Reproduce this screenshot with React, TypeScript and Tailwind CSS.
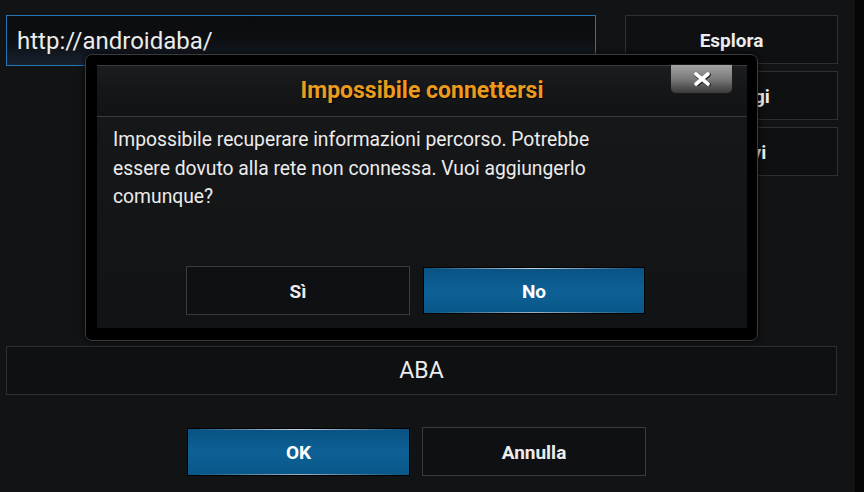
import React from 'react';

const font = { fontFamily: 'Roboto, "Liberation Sans", sans-serif' };

const SideButton = ({ label }: { label: string }) => (
  <div className="h-[49px] w-[213px] border border-[#2e2f31] bg-[#0f1012] flex items-center justify-center pt-[4px] text-[19px] font-bold text-[#ececec]">
    {label}
  </div>
);

const BlueButton = ({ label, className = '' }: { label: string; className?: string }) => (
  <div className={`relative border border-black bg-gradient-to-b from-[#0a5283] via-[#0d6196] to-[#095788] flex items-center justify-center pt-[3px] text-[19px] font-bold text-white ${className}`}>
    <div className="absolute left-[6px] right-[6px] top-0 h-px bg-gradient-to-r from-transparent via-[#c9d6df] to-transparent" />
    <div className="absolute left-[6px] right-[6px] bottom-0 h-px bg-gradient-to-r from-transparent via-[#9fb4c4] to-transparent" />
    {label}
  </div>
);

const DarkButton = ({ label, className = '' }: { label: string; className?: string }) => (
  <div className={`border border-[#3a3b3d] bg-[#0f1013] flex items-center justify-center pt-[3px] text-[19px] font-bold text-[#ececec] ${className}`}>
    {label}
  </div>
);

export default function App() {
  return (
    <div className="relative w-[864px] h-[492px] overflow-hidden bg-[#121315] flex" style={font}>
      <div className="flex-1 flex flex-col pt-[15px] pl-[6px]">
        {/* top row: path input and side buttons */}
        <div className="flex">
          <div className="relative w-[590px] h-[51px] border border-[#2774b0] bg-gradient-to-b from-[#0b0c0e] via-[#0d0f12] to-[#172230] flex items-center pl-[10px] text-[24px] text-[#ececec]">
            http://androidaba/
          </div>
          <div className="ml-[29px] flex flex-col gap-[7px]">
            <SideButton label="Esplora" />
            <SideButton label="Aggiungi" />
            <SideButton label="Rimuovi" />
          </div>
        </div>

        <div className="mt-[170px] w-[831px] h-[49px] border border-[#2e2f31] bg-[#0f1012] flex items-center justify-center pt-[2px] text-[23px] text-[#ececec]">
          ABA
        </div>

        <div className="mt-[32px] flex gap-[12px] pl-[181px]">
          <BlueButton label="OK" className="w-[223px] h-[48px] mt-px" />
          <DarkButton label="Annulla" className="w-[224px] h-[49px]" />
        </div>
      </div>
      <div className="w-[9px] bg-[#050505]" />

      {/* dialog */}
      <div className="absolute left-[85px] top-[54px] w-[673px] h-[287px] rounded-[7px] border border-[#3a3b3e] bg-black pt-[10px] pl-[11px] pr-[10px] pb-[12px] shadow-[0_0_6px_rgba(0,0,0,0.8)]">
        <div className="h-full flex flex-col bg-gradient-to-b from-[#17181a] to-[#121315]">
          <div className="h-[52px] shrink-0 border-t border-b border-[#3a3b3d] bg-gradient-to-b from-[#1c1d20] via-[#151618] to-[#121315] flex items-center justify-center">
            <span className="text-[23px] font-bold text-[#eb9b1e] [text-shadow:1px_1px_1px_#000]">Impossibile connettersi</span>
          </div>
          <p className="pt-[9px] pl-[16px] w-[506px] text-[19.3px] leading-[28.5px] text-[#ececec]">
            Impossibile recuperare informazioni percorso. Potrebbe essere dovuto alla rete non connessa. Vuoi aggiungerlo comunque?
          </p>
          <div className="mt-auto mb-[13px] flex gap-[13px] pl-[89px]">
            <DarkButton label="Sì" className="w-[224px] h-[49px]" />
            <BlueButton label="No" className="w-[222px] h-[47px] mt-px" />
          </div>
        </div>
        <div className="absolute left-[584px] top-[9px] w-[63px] h-[30px] rounded-b-[6px] border border-[#1a1a1a] bg-gradient-to-b from-[#a3a3a3] via-[#7a7a7a] to-[#3a3a3a] flex items-center justify-center">
          <svg width="18" height="14" viewBox="0 0 18 14">
            <path d="M3 2 L15 12 M15 2 L3 12" stroke="#1d1d1d" strokeWidth="4.5" strokeLinecap="round" transform="translate(0.6 0.8)" />
            <path d="M3 2 L15 12 M15 2 L3 12" stroke="#ffffff" strokeWidth="3.6" strokeLinecap="round" />
          </svg>
        </div>
      </div>
    </div>
  );
}
